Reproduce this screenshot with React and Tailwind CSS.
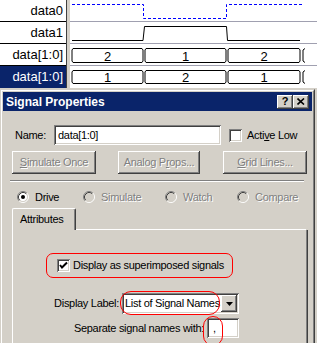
import React from "react";

const raised =
  "bg-[#d4d0c8] shadow-[inset_-1px_-1px_#404040,inset_1px_1px_#ffffff,inset_-2px_-2px_#808080,inset_2px_2px_#d4d0c8]";
const sunken =
  "shadow-[inset_1px_1px_#808080,inset_-1px_-1px_#ffffff,inset_2px_2px_#404040,inset_-2px_-2px_#d4d0c8]";
const grayText = "text-[#808080] [text-shadow:1px_1px_0_#ffffff]";

const labels = [
  { name: "data0" },
  { name: "data1" },
  { name: "data[1:0]" },
  { name: "data[1:0]", selected: true },
];

// bus segment with little hooked ends
const seg = (a, b, top, bot) =>
  `M${a + 2} ${top} L${b - 2} ${top} L${b - 1} ${top + 1.5} L${b - 1} ${bot - 1.5} L${b - 2} ${bot} L${a + 2} ${bot} L${a + 1} ${bot - 1.5} L${a + 1} ${top + 1.5} Z`;

const Waves = () => (
  <svg width="247" height="88" viewBox="70 0 247 88" className="block">
    <rect x="70" y="0" width="247" height="88" fill="#ffffff" />
    {[21.5, 43.5, 65.5].map((y) => (
      <line key={y} x1="70" x2="317" y1={y} y2={y} stroke="#a0a0b0" />
    ))}
    {/* data0 */}
    <path
      d="M72 4.5 L143.5 4.5 L143.5 18.5 L226.5 18.5 L226.5 4.5 L303 4.5"
      fill="none"
      stroke="#0000ff"
      strokeDasharray="3 2"
    />
    {/* data1 */}
    <path
      d="M72 40.5 L143 40.5 L144.5 26.5 L226.5 26.5 L227.5 40.5 L300 40.5"
      fill="none"
      stroke="#000000"
    />
    {/* bus rows */}
    {[
      { top: 48.5, bot: 62.5, vals: ["2", "1", "2"] },
      { top: 70.5, bot: 83.5, vals: ["1", "2", "1"] },
    ].map((r, i) => {
      const xs = [71, 144, 227, 301];
      return (
        <g key={i}>
          {r.vals.map((v, j) => (
            <g key={j}>
              <path d={seg(xs[j], xs[j + 1], r.top, r.bot)} fill="none" stroke="#000" />
              <text
                x={(xs[j] + xs[j + 1]) / 2}
                y={(r.top + r.bot) / 2 + 5}
                textAnchor="middle"
                fontSize="13"
                fontFamily="'Liberation Sans', Arial, sans-serif"
                fill="#000"
              >
                {v}
              </text>
            </g>
          ))}
          <path
            d={`M305 ${r.top} L303 ${r.top + 1.5} L303 ${r.bot - 1.5} L305 ${r.bot}`}
            fill="none"
            stroke="#000"
          />
        </g>
      );
    })}
  </svg>
);

const Radio = ({ checked, disabled }) => (
  <svg width="12" height="12" viewBox="0 0 12 12" className="block shrink-0">
    <circle cx="6" cy="6" r="4.5" fill={disabled ? "#d4d0c8" : "#ffffff"} />
    <path d="M2.11 9.89 A5.5 5.5 0 0 1 9.89 2.11" fill="none" stroke="#808080" />
    <path d="M9.89 2.11 A5.5 5.5 0 0 1 2.11 9.89" fill="none" stroke="#ffffff" />
    <path d="M2.82 9.18 A4.5 4.5 0 0 1 9.18 2.82" fill="none" stroke="#404040" />
    <path d="M9.18 2.82 A4.5 4.5 0 0 1 2.82 9.18" fill="none" stroke="#d4d0c8" />
    {checked && <circle cx="6" cy="6" r="2" fill="#000" />}
  </svg>
);

const Checkbox = ({ checked }) => (
  <div className={`w-[13px] h-[13px] bg-white shrink-0 ${sunken}`}>
    {checked && (
      <svg width="13" height="13" viewBox="0 0 13 13" className="block">
        <path d="M3 6 L5 8.5 L10 3.5" fill="none" stroke="#000" strokeWidth="2" />
      </svg>
    )}
  </div>
);

const Button = ({ w, children }) => (
  <div
    className={`h-[23px] ${w} ${raised} flex items-center justify-center ${grayText}`}
  >
    {children}
  </div>
);

const RadioItem = ({ w, label, checked, disabled }) => (
  <div className={`${w} flex items-center gap-[6px]`}>
    <Radio checked={checked} disabled={disabled} />
    <span className={disabled ? grayText : "text-black"}>{label}</span>
  </div>
);

export default function App() {
  return (
    <div className="w-[317px] h-[343px] overflow-hidden whitespace-nowrap bg-[#d4d0c8] font-['Liberation_Sans',Arial,sans-serif]">
      {/* waveform viewer */}
      <div className="flex h-[88px] bg-white">
        <div className="w-[66px] bg-white">
          {labels.map((l, i) => (
            <div
              key={i}
              className={`h-[22px] flex items-center justify-end pr-[3px] text-[13px] ${
                i < 3 ? "border-b border-black" : ""
              } ${l.selected ? "bg-[#0a246a] text-white" : "text-black"}`}
            >
              {l.name}
            </div>
          ))}
        </div>
        <div className="w-[4px] border-l border-[#404040] bg-[#d4d0c8]" />
        <Waves />
      </div>

      {/* dialog */}
      <div className="mt-[1px] w-[315px] border border-t-[#d4d0c8] border-l-[#d4d0c8] border-r-[#404040] border-b-[#404040]">
        <div className="border border-t-white border-l-white border-r-[#808080] border-b-[#808080] p-[1px] h-[260px]">
          <div className="h-[19px] bg-[#0a246a] flex items-center pl-[3px] pr-[3px]">
            <span className="text-white font-bold text-[12px] flex-1">Signal Properties</span>
            <div className={`w-[16px] h-[14px] ${raised} flex items-center justify-center text-black font-bold text-[11px] leading-none`}>
              ?
            </div>
            <div className={`w-[16px] h-[14px] ${raised} flex items-center justify-center`}>
              <svg width="8" height="7" viewBox="0 0 8 7" className="block">
                <path d="M0.5 0.5 L7 6.5 M7 0.5 L0.5 6.5" stroke="#000" strokeWidth="1.6" />
              </svg>
            </div>
          </div>

          <div className="text-[11px] tracking-[-0.3px] text-black">
            {/* name row */}
            <div className="mt-[14px] h-[20px] flex items-center">
              <span className="ml-[12px] w-[39px]">Name:</span>
              <div className={`w-[167px] h-[20px] bg-white ${sunken} flex items-center pl-[4px]`}>
                data[1:0]
              </div>
              <div className="ml-[8px]">
                <Checkbox />
              </div>
              <span className="ml-[5px]">
                Acti<u>v</u>e Low
              </span>
            </div>

            {/* buttons */}
            <div className="mt-[6px] flex items-center">
              <div className="ml-[9px]">
                <Button w="w-[84px]">
                  <u>S</u>imulate Once
                </Button>
              </div>
              <div className="ml-[22px]">
                <Button w="w-[82px]">
                  Analog P<u>r</u>ops...
                </Button>
              </div>
              <div className="ml-[23px]">
                <Button w="w-[84px]">
                  <u>G</u>rid Lines...
                </Button>
              </div>
            </div>

            {/* separator */}
            <div className="mt-[6px] ml-[7px] w-[294px] border-t border-[#808080] border-b border-b-white" />

            {/* radios */}
            <div className="mt-[9px] h-[12px] ml-[14px] flex items-center">
              <RadioItem w="w-[66px]" label="Drive" checked />
              <RadioItem w="w-[82px]" label="Simulate" disabled />
              <RadioItem w="w-[72px]" label="Watch" disabled />
              <RadioItem w="w-[70px]" label="Compare" disabled />
            </div>

            {/* tab header */}
            <div className="mt-[5px] ml-[9px] w-[296px] flex items-end">
              <div className="w-[64px] h-[22px] border-l border-t border-white border-r border-r-[#404040] rounded-tl-[2px] rounded-tr-[2px] shadow-[inset_-1px_0_#808080] flex items-center pl-[7px]">
                Attributes
              </div>
              <div className="flex-1 h-[1px] bg-white mr-[2px]" />
            </div>

            {/* tab panel */}
            <div className="ml-[9px] w-[296px] h-[120px] border-l border-white border-r border-r-[#404040] shadow-[inset_-1px_0_#808080]">
              <div className="pt-[23px]">
                <div className="ml-[33px] w-[187px] h-[25px] border border-[#ff0000] rounded-[7px] flex items-center pl-[10px] gap-[3px]">
                  <Checkbox checked />
                  <span>Display as superimposed signals</span>
                </div>

                <div className="mt-[15px] h-[21px] flex items-center">
                  <span className="w-[107px] text-right pr-[1px]">Display Label:</span>
                  <div className="relative ml-[2px]">
                    <div className={`w-[117px] h-[21px] bg-white ${sunken} flex items-center p-[2px]`}>
                      <span className="flex-1 pl-[1px] overflow-hidden">List of Signal Names</span>
                      <div className={`w-[16px] h-[17px] shrink-0 ${raised} flex items-center justify-center`}>
                        <svg width="7" height="4" viewBox="0 0 7 4" className="block">
                          <path d="M0 0 L7 0 L3.5 4 Z" fill="#000" />
                        </svg>
                      </div>
                    </div>
                    <div className="absolute left-[-2px] top-[-2px] w-[100px] h-[24px] border border-[#ff0000] rounded-[11px]" />
                  </div>
                </div>

                <div className="mt-[4px] h-[20px] flex items-center">
                  <span className="w-[192px] text-right pr-[1px]">Separate signal names with:</span>
                  <div className="relative ml-[2px]">
                    <div className={`w-[32px] h-[20px] bg-white ${sunken} flex items-center pl-[6px]`}>
                      ,
                    </div>
                    <div className="absolute left-[-4px] top-[-2px] w-[20px] h-[30px] border border-[#ff0000] rounded-[10px]" />
                  </div>
                </div>
              </div>
            </div>
          </div>
        </div>
      </div>
    </div>
  );
}
